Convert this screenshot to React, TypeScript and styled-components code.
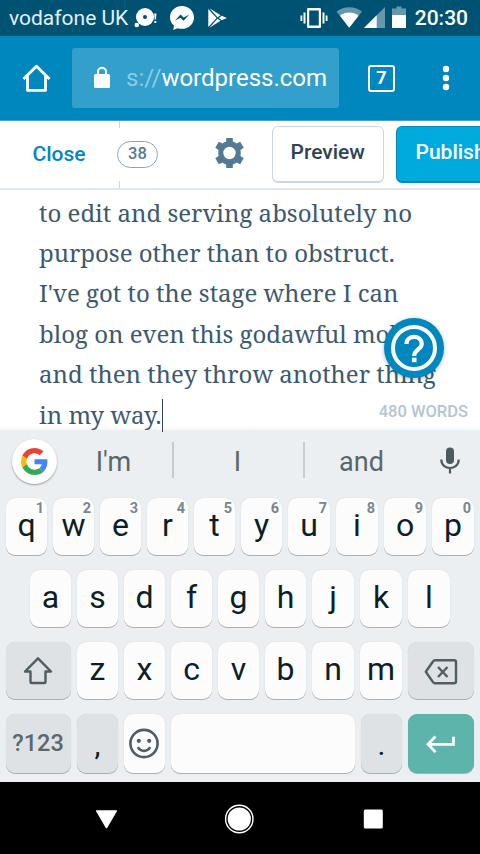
import React from 'react';
import styled, { createGlobalStyle } from 'styled-components';

const Global = createGlobalStyle`
  * { box-sizing: border-box; }
  body { margin: 0; background: #000; font-family: Roboto, sans-serif; }
  svg { display: block; flex: none; }
`;

const Screen = styled.div`
  width: 480px;
  height: 854px;
  overflow: hidden;
  display: flex;
  flex-direction: column;
  background: #fff;
`;

const Label = styled.span<{ $size: number; $color: string; $weight?: number; $track?: number }>`
  font-size: ${p => p.$size}px;
  color: ${p => p.$color};
  font-weight: ${p => p.$weight ?? 400};
  letter-spacing: ${p => p.$track ?? 0}px;
  line-height: 1;
  white-space: nowrap;
`;

const Pad = styled.div<{ $left: number }>`
  margin-left: ${p => p.$left}px;
`;

const StatusBar = styled.header`
  flex: none;
  height: 36px;
  padding: 0 12px 0 9px;
  display: flex;
  align-items: center;
  justify-content: space-between;
  background: #005272;
`;

const StatusGroup = styled.div`
  display: flex;
  align-items: center;
  height: 36px;
`;

const CarrierName = styled.div`
  width: 125px;
  padding-top: 1px;
  flex: none;
`;

const BrowserBar = styled.div`
  flex: none;
  height: 85px;
  padding: 12px 0 0 22px;
  display: flex;
  align-items: flex-start;
  background: #0087be;
  border-bottom: 1px solid #4b9fc4;
`;

const ToolSlot = styled.div<{ $width: number }>`
  width: ${p => p.$width}px;
  height: 60px;
  flex: none;
  display: flex;
  align-items: center;
`;

const UrlBox = styled.div`
  width: 267px;
  height: 60px;
  flex: none;
  padding: 0 0 0 21px;
  display: flex;
  align-items: center;
  gap: 15px;
  border-radius: 3px;
  background: #339fcb;
`;

const UrlText = styled.div`
  color: #fff;
  font-size: 24px;
  line-height: 28px;
  letter-spacing: 0;
  white-space: nowrap;
`;

const Scheme = styled.span`
  color: #8ecae4;
`;

const TabCount = styled.div`
  width: 27px;
  height: 27px;
  display: flex;
  align-items: center;
  justify-content: center;
  border: 2.5px solid #fff;
  border-radius: 3px;
  font-size: 18px;
  font-weight: 700;
  line-height: 1;
  color: #fff;
`;

const EditorBar = styled.div`
  flex: none;
  height: 69px;
  display: flex;
  align-items: flex-start;
  overflow: hidden;
  background: #fff;
  border-bottom: 2px solid #dfe7ed;
`;

const CloseCell = styled.div`
  width: 117px;
  height: 67px;
  flex: none;
  padding: 0 0 1px 32.5px;
  display: flex;
  align-items: center;
`;

const CountCell = styled.div`
  width: 98px;
  height: 67px;
  flex: none;
  display: flex;
  flex-direction: column;
  justify-content: space-between;
`;

const Tick = styled.i`
  width: 1px;
  height: 7px;
  margin-left: 2px;
  background: #c8d7e1;
`;

const CountPill = styled.div`
  width: 41px;
  height: 27px;
  display: flex;
  align-items: center;
  justify-content: center;
  padding-bottom: 1px;
  border: 1px solid #87a6bc;
  border-radius: 14px;
`;

const GearCell = styled.div`
  width: 57px;
  height: 64px;
  flex: none;
  display: flex;
  align-items: center;
`;

const ActionButton = styled.button<{ $primary?: boolean }>`
  width: 112px;
  height: 57px;
  flex: none;
  margin: 5px 12px 0 0;
  padding: 0 0 5px ${p => (p.$primary ? 18.5 : 17.5)}px;
  text-align: left;
  font: 500 21px/24px Roboto, sans-serif;
  white-space: nowrap;
  border: 1px solid ${p => (p.$primary ? '#008ab3' : '#c8d7e1')};
  border-bottom-width: 2px;
  border-radius: 6px;
  color: ${p => (p.$primary ? '#fff' : '#2e4453')};
  background: ${p => (p.$primary ? '#00aadc' : '#fff')};
`;

const Editor = styled.main`
  flex: none;
  height: 240px;
  position: relative;
  padding: 2.6px 0 0 39px;
  background: linear-gradient(#fff 236px, #f5f6f7 240px);
`;

const Line = styled.p`
  margin: 0;
  height: 40.4px;
  font: 24px/40.4px 'Noto Serif', 'Droid Serif', 'DejaVu Serif', serif;
  color: #3d596d;
  white-space: nowrap;
`;

const Caret = styled.i`
  display: inline-block;
  width: 1.5px;
  height: 33px;
  margin-bottom: -8px;
  vertical-align: baseline;
  background: #2e4453;
`;

const HelpButton = styled.div`
  position: absolute;
  left: 384px;
  top: 128px;
  width: 60px;
  height: 60px;
  border-radius: 50%;
  background: #0087be;
  box-shadow: 0 1px 4px rgba(0, 60, 90, 0.35);
`;

const WordCount = styled.div`
  position: absolute;
  right: 12px;
  top: 213px;
  font: 500 16.5px/18px Roboto, sans-serif;
  color: #b3c5d3;
`;

const Keyboard = styled.section`
  flex: none;
  height: 352px;
  display: flex;
  flex-direction: column;
  background: #ebeff2;
`;

const Suggestions = styled.div`
  height: 68px;
  flex: none;
  display: grid;
  grid-template-columns: 57px 115px 2px 129px 2px 115px 60px;
  padding-bottom: 6px;
  align-items: center;
`;

const Suggestion = styled.div`
  padding: 1px 2px 0 0;
  text-align: center;
  font-size: 27px;
  line-height: 32px;
  color: #5a666c;
`;

const Divider = styled.i`
  height: 36px;
  margin-top: -2px;
  background: #c8ccd0;
`;

const GoogleBadge = styled.div`
  width: 45px;
  height: 45px;
  margin: 0 0 0 12px;
  display: grid;
  place-items: center;
  border-radius: 50%;
  background: #fff;
  box-shadow: 0 1px 2px rgba(0, 0, 0, 0.35);
`;

const MicCell = styled.div`
  padding-left: 20px;
`;

const KeyRow = styled.div<{ $cols: string; $inset?: number; $height?: number }>`
  flex: none;
  height: ${p => p.$height ?? 57}px;
  margin: 0 ${p => p.$inset ?? 6}px 15px;
  display: grid;
  grid-template-columns: ${p => p.$cols};
  column-gap: 6px;
`;

const Key = styled.div<{ $tone?: 'dim' | 'go'; $icon?: boolean }>`
  position: relative;
  min-width: 0;
  display: flex;
  align-items: center;
  justify-content: center;
  padding: 0 ${p => (p.$icon ? 1 : 0)}px ${p => (p.$icon ? 0 : 3)}px 0;
  border-radius: 9px;
  font-size: 32px;
  line-height: 38px;
  color: #0c1f28;
  background: ${p => (p.$tone === 'go' ? '#5cb4aa' : p.$tone === 'dim' ? '#dee2e5' : '#fcfcfc')};
  box-shadow: 0 1px 0 #adb0b3, 0 0 1px rgba(0, 0, 0, 0.16);
`;

const Hint = styled.span`
  position: absolute;
  top: 2.5px;
  right: 3px;
  font: 700 14.5px/16px Roboto, sans-serif;
  color: #7b868c;
`;

const Punct = styled.span`
  padding-top: 5px;
  font-size: 30px;
`;

const NavBar = styled.nav`
  flex: none;
  height: 72px;
  padding: 1px 97px 0 95px;
  display: flex;
  align-items: center;
  background: #000;
`;

const lines = [
  'to edit and serving absolutely no',
  'purpose other than to obstruct.',
  "I've got to the stage where I can",
  'blog on even this godawful mobile',
  'and then they throw another thing',
  'in my way.',
];

const ChatIcon = () => (
  <svg width="24" height="22" viewBox="0 0 24 22" fill="#fff">
    <circle cx="11" cy="10" r="9" />
    <circle cx="2.8" cy="18" r="2.3" />
    <circle cx="11" cy="10" r="2" fill="#005272" />
    <path d="M20.2 6.5h2.2l-.4 6h-1.4zM20.3 14h2v2h-2z" />
  </svg>
);

const MessengerIcon = () => (
  <svg width="24" height="24" viewBox="0 0 24 24" fill="#fff">
    <path d="M12 0C5.300 0 0 4.900 0 11.200c0 3.400 1.500 6.300 4 8.300l-.7 4.500 4.200-1.800c1.400.4 2.900.6 4.500.6 6.700 0 12-5 12-11.400S18.700 0 12 0z" />
    <path d="M4.800 14.700 10.500 8.600l3.200 3 5.700-3-5.900 6.200-3.100-3z" fill="#005272" />
  </svg>
);

const PlayIcon = () => (
  <svg width="20" height="20" viewBox="0 0 20 20" fill="#fff">
    <path d="M.3 1v18L8.600 10zM1.500.3 12.600 7.200 9.500 9.300zM1.500 19.700l11.100-6.900-3.100-2.100zM10.800 10l3-2.300 5 2.300-5 2.300z" />
  </svg>
);

const VibrateIcon = () => (
  <svg width="28" height="22" viewBox="0 0 28 22" fill="#fff">
    <path fillRule="evenodd" d="M8.500 1h11c1 0 1.500.5 1.500 1.500v17c0 1-.5 1.500-1.500 1.500h-11C7.500 21 7 20.500 7 19.500v-17C7 1.500 7.500 1 8.500 1zM9.200 3.500v15h9.600v-15z" />
    <path d="M3.500 5.500h2v11h-2zM.5 8.500h1.800v5.500H.5zM22.500 5.500h2v11h-2zM25.700 8.500h1.800v5.500h-1.800z" />
  </svg>
);

const SignalIcons = () => (
  <svg width="70" height="24" viewBox="0 0 70 24" fill="#fff">
    <path d="M.5 5.500C8-.2 18.500-.2 26 5.500L13.200 21.800z" opacity=".4" />
    <path d="M4 9.800c5.500-4.400 13-4.400 18.500 0L13.200 21.800z" />
    <path d="M49 1v21H28z" opacity=".4" />
    <path d="M40.700 9.300V22H28z" />
    <path d="M56 2.500h4.500V.5h5v2H70V9H56z" opacity=".4" />
    <path d="M56 9h14v13H56z" />
  </svg>
);

const letterKeys = (s: string) => s.split('').map(c => <Key key={c}>{c}</Key>);

export default function App() {
  return (
    <Screen>
      <Global />
      <StatusBar>
        <StatusGroup>
          <CarrierName><Label $size={21} $color="#e6eef2">vodafone UK</Label></CarrierName>
          <ToolSlot $width={36}><ChatIcon /></ToolSlot>
          <ToolSlot $width={38}><MessengerIcon /></ToolSlot>
          <PlayIcon />
        </StatusGroup>
        <StatusGroup>
          <VibrateIcon />
          <Pad $left={8}><SignalIcons /></Pad>
          <Pad $left={8.5}><Label $size={21} $color="#fff" $weight={500}>20:30</Label></Pad>
        </StatusGroup>
      </StatusBar>

      <BrowserBar>
        <ToolSlot $width={50}>
          <svg width="29" height="30" viewBox="0 0 29 30" fill="none" stroke="#fff" strokeWidth="2.8" strokeLinejoin="round">
            <path d="M1.500 16 14.500 3.200 27.500 16M5.500 13v14.400h18V13" />
          </svg>
        </ToolSlot>
        <UrlBox>
          <svg width="18" height="24" viewBox="0 0 18 24">
            <rect x="1" y="8" width="16" height="14" rx="1.500" fill="#fff" />
            <path d="M5 9V5.700a4 4 0 0 1 8 0V9" fill="none" stroke="#fff" strokeWidth="2" />
          </svg>
          <UrlText><Scheme>s://</Scheme>wordpress.com</UrlText>
        </UrlBox>
        <ToolSlot $width={101}>
          <Pad $left={29}><TabCount>7</TabCount></Pad>
        </ToolSlot>
        <svg width="12" height="60" viewBox="0 0 12 60" fill="#fff">
          <circle cx="6" cy="21" r="3.200" /><circle cx="6" cy="30" r="3.200" /><circle cx="6" cy="39" r="3.200" />
        </svg>
      </BrowserBar>

      <EditorBar>
        <CloseCell><Label $size={21} $color="#0087be" $weight={500}>Close</Label></CloseCell>
        <CountCell>
          <Tick />
          <CountPill><Label $size={16.5} $color="#537994" $weight={500}>38</Label></CountPill>
          <Tick />
        </CountCell>
        <GearCell>
          <svg width="29" height="30" viewBox="0 0 29 30" fill="#537994">
            <path fillRule="evenodd" d="M11.200 0h6.600v3.400q1.900.6 3.700 2.100l3.700-1.700 3.500 6-3.200 2.200q.5 3 0 6l3.200 2.200-3.500 6-3.700-1.700q-1.800 1.500-3.700 2.100V30h-6.600v-3.400q-1.900-.6-3.700-2.100l-3.700 1.700-3.500-6L3.500 18q-.5-3 0-6L.3 9.800l3.500-6 3.700 1.700q1.800-1.500 3.700-2.100zM14.500 8.800a6.200 6.200 0 1 0 0 12.400 6.200 6.200 0 0 0 0-12.400z" />
          </svg>
        </GearCell>
        <ActionButton>Preview</ActionButton>
        <ActionButton $primary>Publish</ActionButton>
      </EditorBar>

      <Editor>
        {lines.map((text, i) => (
          <Line key={text}>{text}{i === 5 && <Caret />}</Line>
        ))}
        <HelpButton>
          <svg width="60" height="60" viewBox="0 0 60 60" fill="none" stroke="#fff">
            <circle cx="30" cy="30" r="21" strokeWidth="4" />
            <path d="M22.500 26c0-9.500 15.200-9.500 15.200 0 0 5.500-7.500 5.500-7.500 12" strokeWidth="4.200" />
            <path d="M27.900 39.700h4.600v4.500h-4.600z" fill="#fff" stroke="none" />
          </svg>
        </HelpButton>
        <WordCount>480 WORDS</WordCount>
      </Editor>

      <Keyboard>
        <Suggestions>
          <GoogleBadge>
            <svg width="27" height="27" viewBox="0 0 48 48">
              <path fill="#ea4335" d="M24 9.500c3.540 0 6.710 1.220 9.210 3.600l6.850-6.850C35.900 2.380 30.470 0 24 0 14.620 0 6.510 5.380 2.560 13.220l7.980 6.190C12.430 13.720 17.740 9.500 24 9.500z" />
              <path fill="#4285f4" d="M46.980 24.550c0-1.570-.15-3.090-.38-4.550H24v9.020h12.940c-.58 2.960-2.260 5.480-4.780 7.180l7.730 6c4.510-4.180 7.090-10.360 7.090-17.650z" />
              <path fill="#fbbc05" d="M10.530 28.590A14.500 14.500 0 0 1 9.770 24c0-1.600.27-3.140.76-4.590l-7.980-6.190A23.900 23.900 0 0 0 0 24c0 3.880.92 7.540 2.560 10.780z" />
              <path fill="#34a853" d="M24 48c6.480 0 11.930-2.130 15.890-5.810l-7.730-6C30.010 37.640 27.240 38.500 24 38.500c-6.260 0-11.570-4.220-13.470-9.910l-7.980 6.190C6.510 42.620 14.620 48 24 48z" />
            </svg>
          </GoogleBadge>
          <Suggestion>I'm</Suggestion>
          <Divider />
          <Suggestion>I</Suggestion>
          <Divider />
          <Suggestion>and</Suggestion>
          <MicCell>
            <svg width="20" height="28" viewBox="0 0 20 28">
              <rect x="6" y=".5" width="8" height="16.500" rx="4" fill="#4c5a61" />
              <path d="M1.300 12.500c0 11.300 17.400 11.300 17.400 0M10 20.800V26.500" fill="none" stroke="#4c5a61" strokeWidth="2.200" />
            </svg>
          </MicCell>
        </Suggestions>
        <KeyRow $cols="repeat(6, 41px) repeat(4, 42px)">
          {'qwertyuiop'.split('').map((c, i) => (
            <Key key={c}>{c}<Hint>{(i + 1) % 10}</Hint></Key>
          ))}
        </KeyRow>
        <KeyRow $cols="repeat(6, 41px) repeat(3, 42px)" $inset={30}>{letterKeys('asdfghjkl')}</KeyRow>
        <KeyRow $cols="65px repeat(5, 41px) repeat(2, 42px) 66px">
          <Key $tone="dim" $icon>
            <svg width="30" height="28" viewBox="0 0 30 28" fill="none" stroke="#4f5d64" strokeWidth="2.400" strokeLinejoin="round">
              <path d="M15 1.300 28 14.500h-5.500V25q0 1-1 1h-13q-1 0-1-1V14.500H2z" />
            </svg>
          </Key>
          {letterKeys('zxcvbnm')}
          <Key $tone="dim" $icon>
            <svg width="34" height="28" viewBox="0 0 34 28" fill="none" stroke="#4f5d64" strokeWidth="2.400" strokeLinejoin="round">
              <path d="M11 3.300h19q2 0 2 2v19q0 2-2 2H11q-1.200 0-2-1.200L1.800 14.800 9 4.500q.8-1.200 2-1.200zM14 10l9.500 10M23.500 10l-9.500 10" />
            </svg>
          </Key>
        </KeyRow>
        <KeyRow $cols="65px 41px 41px 1fr 41px 66px" $height={59}>
          <Key $tone="dim" $icon><Label $size={23.5} $color="#5a676d" $weight={500}>?123</Label></Key>
          <Key $tone="dim"><Punct>,</Punct></Key>
          <Key $icon>
            <svg width="32" height="32" viewBox="0 0 32 32" fill="none" stroke="#4f5d64" strokeWidth="2.600">
              <circle cx="16" cy="15.500" r="13.600" />
              <path d="M9.800 19.100c3 5 9.500 5 12.400 0" />
              <circle cx="10.800" cy="12.800" r="2.100" fill="#4f5d64" stroke="none" />
              <circle cx="21.200" cy="12.800" r="2.100" fill="#4f5d64" stroke="none" />
            </svg>
          </Key>
          <Key />
          <Key $tone="dim"><Punct>.</Punct></Key>
          <Key $tone="go" $icon>
            <svg width="30" height="18" viewBox="0 0 30 18" fill="none" stroke="#fff" strokeWidth="2.800">
              <path d="M9.500 1.500 2 9.300l7.500 7.800M2 9.300h25.500V1.800" />
            </svg>
          </Key>
        </KeyRow>
      </Keyboard>

      <NavBar>
        <svg width="23" height="20" viewBox="0 0 23 20" fill="#fff">
          <path d="M1.700 1.200h19.600q1.200 0 .5 1.200L12.300 18.700q-.8 1-1.600 0L1.200 2.400q-.7-1.200.5-1.200z" />
        </svg>
        <Pad $left={106}>
          <svg width="30" height="30" viewBox="0 0 30 30">
            <circle cx="15.300" cy="15" r="13.700" fill="none" stroke="#fff" strokeWidth="1.400" />
            <circle cx="15.300" cy="15" r="11.600" fill="#fff" />
          </svg>
        </Pad>
        <Pad $left={109}>
          <svg width="20" height="20" viewBox="0 0 20 20">
            <rect x=".8" y=".5" width="19" height="19" rx="1.500" fill="#fff" />
          </svg>
        </Pad>
      </NavBar>
    </Screen>
  );
}
